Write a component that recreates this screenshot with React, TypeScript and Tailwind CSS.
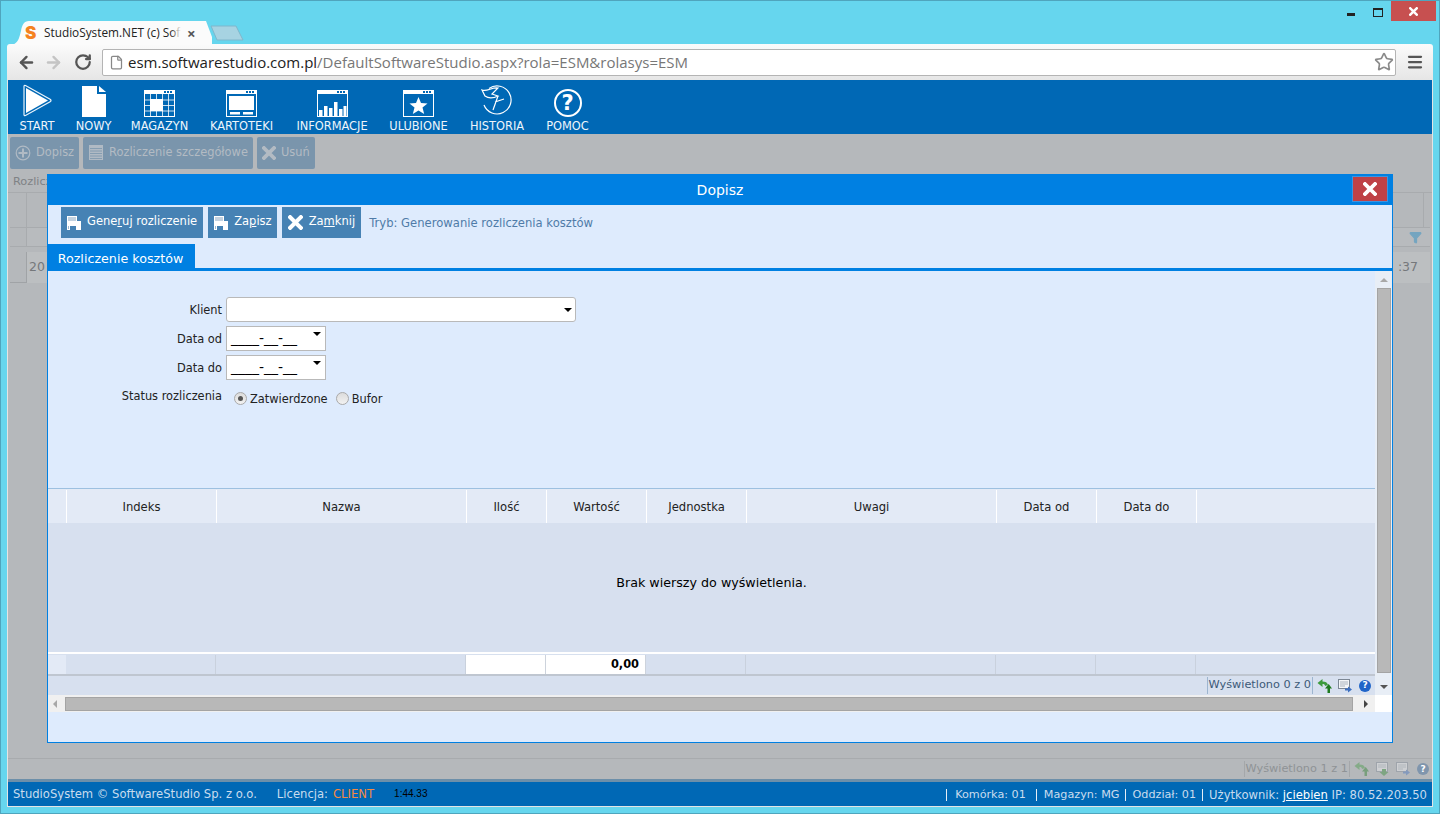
import { ArrowLeft, ArrowRight, RotateCw, File, Star, Menu, Filter } from 'lucide-react';

const WindowFrame = ({ children }: { children: React.ReactNode }) => (
  <svg width="31" height="27" viewBox="0 0 31 27" fill="none" className="shrink-0">
    <rect x="0.5" y="0.5" width="30" height="26" stroke="#fff" />
    <rect x="0" y="0" width="31" height="4" fill="#fff" />
    <rect x="20" y="1" width="2" height="2" fill="#0068b5" />
    <rect x="23" y="1" width="2" height="2" fill="#0068b5" />
    <rect x="26" y="1" width="2" height="2" fill="#0068b5" />
    {children}
  </svg>
);

const StartIcon = () => (
  <svg width="29" height="33" viewBox="0 0 29 33" fill="none">
    <path d="M2.5 1.5 L27.5 15.5 Q28.5 16.5 27.5 17.5 L2.5 31.5 Q1 32 1 30.5 L1 2.5 Q1 1 2.5 1.5 Z" stroke="#e8f3fb" strokeWidth="1.2" fill="#0068b5" />
    <path d="M3 4 L25 16.5 L3 29 Z" fill="#fff" />
  </svg>
);

const NewIcon = () => (
  <svg width="24" height="31" viewBox="0 0 24 31">
    <path d="M0 0 H15 V8 H24 V31 H0 Z" fill="#fff" />
    <path d="M17 0 L24 6 H17 Z" fill="#fff" />
  </svg>
);

const MagazynIcon = () => (
  <WindowFrame>
    <path d="M0 10 H31 M0 15.5 H31 M0 21 H31 M6.5 4 V27 M12.5 4 V27 M18.5 4 V27 M24.5 4 V27" stroke="#fff" strokeWidth="0.8" />
    <rect x="6" y="9" width="13" height="12" fill="#fff" />
  </WindowFrame>
);

const KartotekiIcon = () => (
  <WindowFrame>
    <rect x="3" y="6" width="25" height="14" fill="#fff" />
    <rect x="4" y="22" width="10" height="2.5" fill="#fff" />
    <rect x="17" y="22" width="10" height="2.5" fill="#fff" />
  </WindowFrame>
);

const InformacjeIcon = () => (
  <WindowFrame>
    <path d="M2 26 V20 H5.5 V26 Z M7 26 V16 H10.5 V26 Z M12 26 V18 H15.5 V26 Z M17 26 V12 H20.5 V26 Z M22 26 V19 H25.5 V26 Z M26.5 26 V16 H29.5 V26 Z" fill="#fff" />
  </WindowFrame>
);

const UlubioneIcon = () => (
  <WindowFrame>
    <path d="M15.5 7 L18 13 L24.5 13.5 L19.5 17.5 L21.2 24 L15.5 20.5 L9.8 24 L11.5 17.5 L6.5 13.5 L13 13 Z" fill="#fff" />
  </WindowFrame>
);

const HistoriaIcon = () => (
  <svg width="32" height="32" viewBox="0 0 32 32" fill="none" stroke="#fff" strokeWidth="1.2">
    <path d="M8 3.5 A14 14 0 1 1 3 20" />
    <path d="M1 5 C6 7 11 2 17 3 L11 9 L17 11 C13 13 8 14 4 11 Z" fill="#0068b5" />
    <path d="M17 11 L12 25 M14 17 L23 14" />
  </svg>
);

const PlusCircleIcon = () => (
  <svg width="16" height="16" viewBox="0 0 16 16" fill="none" stroke="#b0bac4" strokeWidth="1.2">
    <circle cx="8" cy="8" r="6.8" />
    <path d="M8 3.5 V12.5 M3.5 8 H12.5" strokeWidth="2" />
  </svg>
);

const ListIcon = () => (
  <svg width="14" height="15" viewBox="0 0 14 15">
    <rect width="14" height="15" fill="#b0bac4" />
    <path d="M1 3.5 H13 M1 6 H13 M1 8.5 H13 M1 11 H13 M1 13.5 H13" stroke="#7a95ac" strokeWidth="0.8" />
  </svg>
);

const CrossIcon = ({ color, size = 14 }: { color: string; size?: number }) => (
  <svg width={size} height={size} viewBox="0 0 14 14">
    <path d="M2 2 L12 12 M12 2 L2 12" stroke={color} strokeWidth="3.8" strokeLinecap="square" />
  </svg>
);

const SaveIcon = () => (
  <svg width="14" height="14" viewBox="0 0 14 14">
    <path d="M0 0 H10 V5 H14 V14 H0 Z" fill="#fff" />
    <rect x="1" y="1" width="8" height="4" fill="#c3d2e0" />
    <rect x="2" y="6" width="11" height="3" fill="#fff" />
    <rect x="3" y="10" width="6" height="4" fill="#4682b4" />
    <rect x="1" y="10" width="1" height="3" fill="#9db8d0" />
  </svg>
);

const RefreshIcon = ({ opacity = 1 }: { opacity?: number }) => (
  <svg width="15" height="14" viewBox="0 0 15 14" opacity={opacity}>
    <path d="M5.5 0 L5.5 2.5 C8.5 2.5 10.5 3.5 11 6 L8 7 C8 5.5 7 5 5.5 5 L5.5 8 L0.5 4 Z" fill="#3d9a3d" />
    <path d="M10.5 14 L10.5 9.5 L8 9.5 L11.7 5 L15 9.5 L13 9.5 L13 14 Z" fill="#1f7a1f" />
  </svg>
);

const ExportIcon = ({ opacity = 1 }: { opacity?: number }) => (
  <svg width="14" height="14" viewBox="0 0 14 14" opacity={opacity}>
    <rect x="0.5" y="0.5" width="11" height="9" fill="#f4f6f8" stroke="#7c8794" />
    <path d="M2 3 H10 M2 5 H10 M2 7 H7" stroke="#9aa4ae" strokeWidth="0.8" />
    <path d="M7 9.5 H10 V7.5 L14 10.5 L10 13.5 V11.5 H7 Z" fill="#3c6fc0" />
  </svg>
);

const DownloadIcon = ({ opacity = 1 }: { opacity?: number }) => (
  <svg width="14" height="14" viewBox="0 0 14 14" opacity={opacity}>
    <rect x="0.5" y="0.5" width="11" height="9" fill="#f4f6f8" stroke="#7c8794" />
    <path d="M2 3 H10 M2 5 H10" stroke="#9aa4ae" strokeWidth="0.8" />
    <path d="M6 7 H10 V10 H12.5 L8 14 L3.5 10 H6 Z" fill="#2e8b2e" />
  </svg>
);

const HelpIcon = ({ className }: { className: string }) => (
  <span className={`flex h-[12px] w-[12px] items-center justify-center rounded-full text-[9px] font-bold leading-none text-white ${className}`}>?</span>
);

const navItems = [
  { label: 'START', width: 'w-[38px]', icon: <StartIcon /> },
  { label: 'NOWY', width: 'w-[35px]', icon: <NewIcon /> },
  { label: 'MAGAZYN', width: 'w-[57px]', icon: <MagazynIcon /> },
  { label: 'KARTOTEKI', width: 'w-[67px]', icon: <KartotekiIcon /> },
  { label: 'INFORMACJE', width: 'w-[74px]', icon: <InformacjeIcon /> },
  { label: 'ULUBIONE', width: 'w-[59px]', icon: <UlubioneIcon /> },
  { label: 'HISTORIA', width: 'w-[58px]', icon: <HistoriaIcon /> },
  {
    label: 'POMOC',
    width: 'w-[43px]',
    icon: (
      <span className="flex h-[28px] w-[28px] items-center justify-center rounded-full border-2 border-white text-[21px] font-bold leading-none text-white">?</span>
    ),
  },
];

const gridCols = 'grid-cols-[18px_150px_250px_80px_100px_100px_250px_100px_100px_1fr]';
const columns = ['', 'Indeks', 'Nazwa', 'Ilość', 'Wartość', 'Jednostka', 'Uwagi', 'Data od', 'Data do', ''];

const ChromeBar = () => (
  <>
    <div className="relative h-[44px] shrink-0">
      <div className="absolute left-[12px] top-[21px] h-[24px] w-[200px]">
        <svg width="200" height="24" viewBox="0 0 200 24" className="absolute inset-0">
          <path d="M0 24 C6 22 7 18 9 10 C10 4 12 0 17 0 H194 L200 16 C201 20 203 23 212 24 Z" fill="#fbfbfb" />
        </svg>
        <div className="relative flex h-full items-center pl-[13px] font-['Open_Sans',sans-serif] text-[11.8px] text-[#222]">
          <span className="w-[19px] font-['Inter',sans-serif] text-[17px] font-black leading-none text-[#f58220]">S</span>
          <span className="relative w-[137px] overflow-hidden whitespace-nowrap">
            StudioSystem.NET (c) Soft
            <span className="absolute right-0 top-0 h-full w-[10px] bg-gradient-to-r from-transparent to-[#fbfbfb]" />
          </span>
          <span className="ml-[6px] text-[15px] font-bold leading-none text-[#555]">×</span>
        </div>
      </div>
      <svg width="34" height="16" viewBox="0 0 34 16" className="absolute left-[210px] top-[25px]">
        <path d="M1 1 H26 L33 15 H7 Z" fill="#a7d3e2" stroke="#7fb7cc" />
      </svg>
      <div className="absolute right-[4px] top-[1px] flex items-start">
        <span className="mr-[18px] mt-[12px] h-[3px] w-[8px] bg-[#222]" />
        <span className="mr-[8px] mt-[7px] h-[9px] w-[10px] border border-t-[2px] border-[#222]" />
        <span className="flex h-[20px] w-[45px] items-center justify-center bg-[#c75050]">
          <CrossIcon color="#fff" size={9} />
        </span>
      </div>
    </div>
    <div className="mx-[7px] flex h-[36px] shrink-0 items-center rounded-t-[3px] bg-gradient-to-b from-[#fbfbfb] to-[#e6e6e6] pl-[10px] pr-[7px]">
      <ArrowLeft size={19} strokeWidth={3} className="text-[#555]" />
      <ArrowRight size={19} strokeWidth={3} className="ml-[8px] text-[#c4c4c4]" />
      <RotateCw size={18} strokeWidth={3} className="ml-[11px] text-[#555]" />
      <div className="ml-[10px] flex h-[27px] w-[1294px] items-center rounded-[2px] border border-[#b4b4b4] bg-white pl-[6px] pr-[1px] font-['Open_Sans',sans-serif] text-[15px]">
        <File size={15} className="mr-[4px] shrink-0 text-[#888]" />
        <span className="text-[#222]">esm.softwarestudio.com.pl</span>
        <span className="text-[#777]">/DefaultSoftwareStudio.aspx?rola=ESM&amp;rolasys=ESM</span>
        <Star size={20} className="ml-auto text-[#8a8a8a]" />
      </div>
      <Menu size={18} strokeWidth={3} className="ml-[10px] text-[#555]" />
    </div>
  </>
);

const BackgroundPage = () => (
  <div className="flex flex-1 flex-col bg-[#b5b8bb]">
    <div className="flex h-[36px] shrink-0 items-center gap-[4px] pl-[2px] pt-[1px] text-[11.4px] text-[#b3bbc3]">
      <div className="flex h-[32px] items-center gap-[5px] rounded-[2px] bg-[#7a95ac] px-[5px]"><PlusCircleIcon />Dopisz</div>
      <div className="flex h-[32px] items-center gap-[6px] rounded-[2px] bg-[#7a95ac] pl-[6px] pr-[5px]"><ListIcon />Rozliczenie szczegółowe</div>
      <div className="flex h-[32px] items-center gap-[5px] rounded-[2px] bg-[#7a95ac] px-[5px]"><CrossIcon color="#b3bbc3" />Usuń</div>
    </div>
    <div className="mt-[3px] flex h-[20px] shrink-0 items-center border-b border-[#a8abae] pl-[5px] text-[11.3px] text-[#7f8285]">Rozliczenie kosztów</div>
    <div className="mx-[2px] flex h-[35px] shrink-0 justify-between border-b border-[#a8abae]">
      <div className="w-[17px] border-r border-[#a8abae]" />
      <div className="w-[7px] border-l border-[#a8abae]" />
    </div>
    <div className="mx-[2px] flex h-[19px] shrink-0 items-center justify-between border-b border-[#a8abae] bg-[#b8bbbe]">
      <div className="h-full w-[17px] border-r border-[#a8abae] bg-[#b5b8bb]" />
      <Filter size={13} fill="#74a5c0" className="mr-[8px] text-[#74a5c0]" />
    </div>
    <div className="mx-[2px] mt-[5px] flex h-[31px] shrink-0 items-center justify-between bg-[#bcbfc1] pr-[12px] text-[12.5px] text-[#75787b]">
      <div className="flex h-full items-center">
        <div className="h-full w-[17px] border-r border-b border-[#a0a3a6] bg-[#b5b8bb]" />
        <span className="ml-[2px]">20</span>
      </div>
      <span>:37</span>
    </div>
    <div className="flex-1" />
    <div className="flex h-[21px] shrink-0 items-center justify-end border-t border-[#a8abae] pr-[3px] text-[11.3px] text-[#8f9396]">
      <span className="border-x border-[#a4a7aa] px-[1px]">Wyświetlono 1 z 1</span>
      <span className="ml-[4px]"><RefreshIcon opacity={0.4} /></span>
      <span className="ml-[7px]"><DownloadIcon opacity={0.4} /></span>
      <span className="ml-[6px]"><ExportIcon opacity={0.4} /></span>
      <HelpIcon className="ml-[7px] bg-[#7f95ad]" />
    </div>
    <div className="h-[3px] shrink-0 bg-[#6d8fa9]" />
  </div>
);

const FormRow = ({ label, children }: { label: string; children: React.ReactNode }) => (
  <div className="flex items-center gap-[4px]">
    <span className="w-[174px] pt-[3px] text-right text-[#222]">{label}</span>
    {children}
  </div>
);

const Triangle = () => <span className="block h-0 w-0 border-x-[4px] border-t-[4px] border-x-transparent border-t-black" />;

const DateField = () => (
  <div className="flex h-[25px] w-[100px] items-start justify-between border border-[#b9b9b9] bg-white px-[4px] text-black">
    <span className="text-[14px] leading-[22px]">____-__-__</span>
    <span className="mt-[5px]"><Triangle /></span>
  </div>
);

const Radio = ({ checked }: { checked?: boolean }) => (
  <span className="flex h-[13px] w-[13px] items-center justify-center rounded-full border border-[#a9a9a9] bg-gradient-to-b from-[#dcdcdc] to-[#f2f2f2]">
    {checked && <span className="h-[5px] w-[5px] rounded-full bg-[#555]" />}
  </span>
);

const ActionButton = ({ icon, right = 'pr-[6px]', children }: { icon: React.ReactNode; right?: string; children: React.ReactNode }) => (
  <div className={`flex h-[31px] items-center gap-[6px] bg-[#4682b4] pl-[6px] text-[11.5px] text-white ${right}`}>
    {icon}
    <span className="pb-[1px]">{children}</span>
  </div>
);

const Modal = () => (
  <div className="absolute left-[47px] top-[174px] flex h-[569px] w-[1346px] flex-col border border-[#0080e2] bg-[#deebfd]">
    <div className="flex h-[30px] shrink-0 items-center justify-center bg-[#0080e2] text-[14px] text-white">
      Dopisz
      <span className="absolute right-[4px] top-[1px] flex h-[26px] w-[36px] items-center justify-center border border-[#3d93e0] bg-[#bf4146]">
        <CrossIcon color="#fff" />
      </span>
    </div>
    <div className="flex h-[33px] shrink-0 items-end gap-[5px] pl-[13px]">
      <ActionButton icon={<SaveIcon />}>Gene<u>r</u>uj rozliczenie</ActionButton>
      <ActionButton icon={<SaveIcon />} right="pr-[5px]">Za<u>p</u>isz</ActionButton>
      <ActionButton icon={<CrossIcon color="#fff" size={15} />}>Za<u>m</u>knij</ActionButton>
      <span className="ml-[3px] self-center pt-[4px] text-[11.6px] text-[#4f7ba8]">Tryb: Generowanie rozliczenia kosztów</span>
    </div>
    <div className="mt-[6px] flex h-[24px] w-[147px] shrink-0 items-center justify-center bg-[#0080e2] pr-[2px] pt-[5px] text-[12.7px] font-medium text-white">Rozliczenie kosztów</div>
    <div className="h-[3px] shrink-0 bg-[#0080e2]" />
    <div className="flex h-[424px] shrink-0">
      <div className="flex w-[1327px] flex-col">
        <div className="flex h-[217px] shrink-0 flex-col gap-[4px] pt-[26px] text-[11.4px]">
          <FormRow label="Klient">
            <div className="flex h-[25px] w-[350px] items-center justify-end rounded-[3px] border border-[#b9b9b9] bg-white pr-[3px]"><Triangle /></div>
          </FormRow>
          <FormRow label="Data od"><DateField /></FormRow>
          <FormRow label="Data do"><DateField /></FormRow>
          <div className="mt-[4px] flex items-start gap-[4px]">
            <span className="w-[174px] text-right text-[#222]">Status rozliczenia</span>
            <div className="ml-[8px] flex items-center text-[#222]">
              <Radio checked />
              <span className="ml-[3px] mr-[8px] mt-[3px]">Zatwierdzone</span>
              <Radio />
              <span className="ml-[3px] mt-[3px]">Bufor</span>
            </div>
          </div>
        </div>
        <div className={`grid h-[35px] shrink-0 border-t border-[#9dc0e0] bg-[#e3eaf6] pt-[1px] text-[11.6px] text-[#222] ${gridCols}`}>
          {columns.map((c, i) => (
            <div key={i} className="flex items-center justify-center border-l border-white pt-[2px] first:border-l-0">{c}</div>
          ))}
        </div>
        <div className="flex h-[129px] shrink-0 items-center justify-center bg-[#d7e0ef] pb-[9px] text-[12.7px] text-black">Brak wierszy do wyświetlenia.</div>
        <div className="h-[2px] shrink-0 bg-white" />
        <div className={`grid h-[22px] shrink-0 border-b-2 border-[#bfc6d0] bg-[#d7e0ef] pt-[1px] text-[11.4px] ${gridCols}`}>
          {columns.map((_, i) => (
            <div
              key={i}
              className={
                i === 3 || i === 4
                  ? 'flex items-center justify-end border-r border-[#cdd3dc] bg-white pr-[6px] font-bold text-black'
                  : i === 0
                    ? 'bg-[#e3eaf6]'
                    : 'border-r border-[#c9d1dd] last:border-r-0'
              }
            >
              {i === 4 ? '0,00' : ''}
            </div>
          ))}
        </div>
        <div className="flex flex-1 items-center justify-end bg-[#d7e0ef] pr-[4px] text-[11.3px] text-[#3c5a78]">
          <span className="border-x border-[#9db5cf] px-[1px]">Wyświetlono 0 z 0</span>
          <span className="ml-[4px]"><RefreshIcon /></span>
          <span className="ml-[6px]"><ExportIcon /></span>
          <HelpIcon className="ml-[7px] bg-[#1f64c8]" />
        </div>
      </div>
      <div className="flex w-[17px] flex-col items-center bg-[#e8eef6]">
        <span className="mt-[7px] h-0 w-0 border-x-[4px] border-b-[4px] border-x-transparent border-b-[#a8a8a8]" />
        <span className="mt-[6px] h-[385px] w-[14px] border border-[#a4a4a4] bg-[#b8b8b8]" />
        <span className="mt-[12px] h-0 w-0 border-x-[4px] border-t-[4px] border-x-transparent border-t-[#555]" />
      </div>
    </div>
    <div className="flex h-[17px] shrink-0 items-center bg-white">
      <div className="flex h-full w-[1327px] items-center bg-[#f0f0f0]">
        <span className="ml-[5px] h-0 w-0 border-y-[4px] border-r-[4px] border-y-transparent border-r-[#a8a8a8]" />
        <span className="ml-[8px] h-[14px] w-[1288px] border border-[#a4a4a4] bg-[#b8b8b8]" />
        <span className="ml-[11px] h-0 w-0 border-y-[4px] border-l-[4px] border-y-transparent border-l-[#444]" />
      </div>
    </div>
  </div>
);

export default function App() {
  return (
    <div className="relative flex h-[814px] w-[1440px] flex-col overflow-hidden bg-[#66d6ee] font-['DejaVu_Sans',sans-serif] shadow-[inset_0_0_0_1px_#4fa5bd]">
      <ChromeBar />
      <div className="mx-[7px] flex h-[727px] shrink-0 flex-col border-x border-b border-[#e4e4e4]">
        <div className="flex h-[54px] shrink-0 gap-[20px] bg-[#0068b5] pl-[10px]">
          {navItems.map((item) => (
            <div key={item.label} className={`flex flex-col items-center ${item.width}`}>
              <div className="flex h-[37px] items-end">{item.icon}</div>
              <span className="mt-[3px] whitespace-nowrap text-[11.4px] leading-[13px] text-[#eef5fb]">{item.label}</span>
            </div>
          ))}
        </div>
        <BackgroundPage />
        <div className="flex h-[24px] shrink-0 items-center bg-[#0068b5] px-[5px] pt-[2px] text-[11.6px] text-[#c9dcee]">
          <span>StudioSystem © SoftwareStudio Sp. z o.o.</span>
          <span className="ml-[20px]">Licencja:</span>
          <span className="ml-[5px] text-[#f58a42]">CLIENT</span>
          <span className="mb-[4px] ml-[20px] font-['Liberation_Sans',sans-serif] text-[10px] text-black">1:44.33</span>
          <div className="ml-auto flex items-center text-[11.2px]">
            <span className="mr-[10px] border-l border-[#e6eef6] pl-[8px] leading-[12px]">Komórka: 01</span>
            <span className="mr-[5px] border-l border-[#e6eef6] pl-[7px] leading-[12px]">Magazyn: MG</span>
            <span className="mr-[6px] border-l border-[#e6eef6] pl-[7px] leading-[12px]">Oddział: 01</span>
            <span className="border-l border-[#e6eef6] pl-[6px] text-[11.6px] leading-[12px]">Użytkownik: <u className="text-white">jciebien</u> IP: 80.52.203.50</span>
          </div>
        </div>
      </div>
      <Modal />
    </div>
  );
}
